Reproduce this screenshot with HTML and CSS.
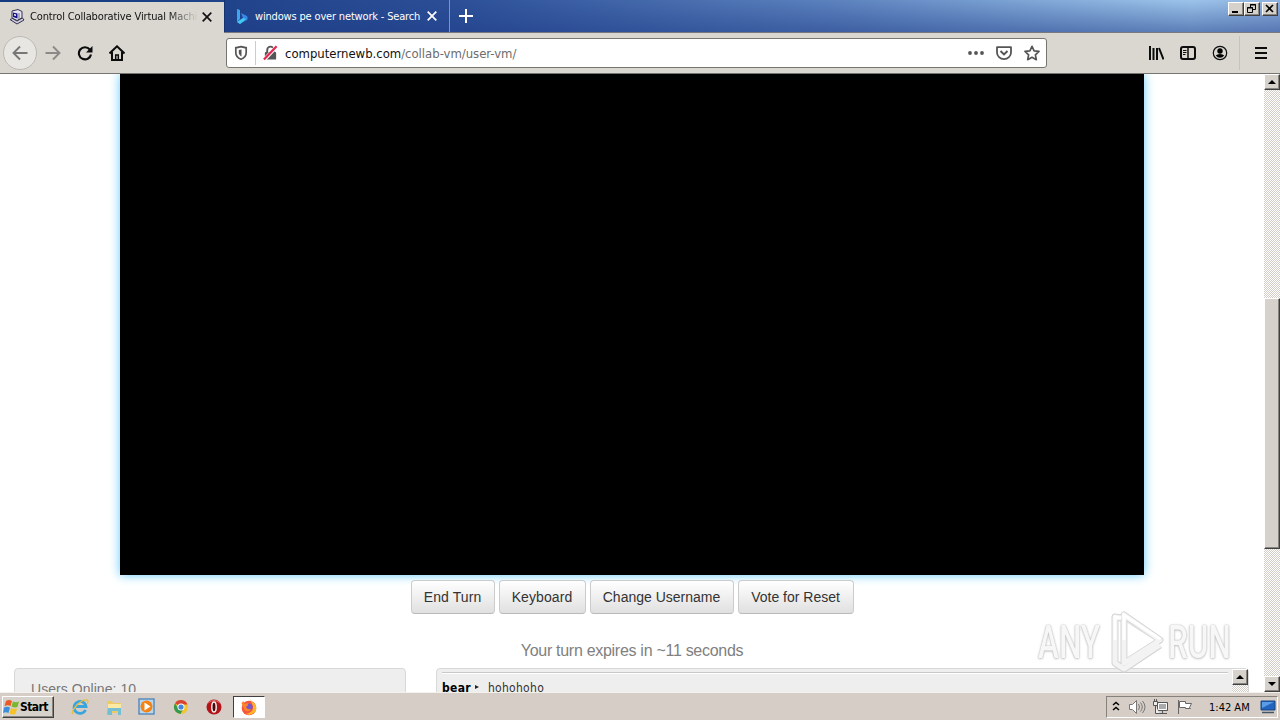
FILE: index.html
```
<!DOCTYPE html>
<html lang="en">
<head>
    <meta charset="UTF-8">
    <title>Control Collaborative Virtual Machines</title>
    <link rel="stylesheet" href="styles.css">
</head>
<body>
    <header class="tabs">
        <div class="tab active">
            <svg class="favicon" width="16" height="16" viewBox="0 0 16 16">
                <path d="M3 2l6-1.500 4 2V9l-5 2.500L3 9z" fill="#e4e2ee" stroke="#33304c"/>
                <path d="M4 3.500l4.500 1v5L4 8z" fill="#14148c"/>
                <path d="M5 5l2 .5V7l-2-.5z" fill="#fff"/>
                <path d="M10 4v6" stroke="#77748c" fill="none"/>
                <path d="M1 10.500l2.500-1L8 12l5.500-3L15 11l-7 4z" fill="#d0cedc" stroke="#33304c"/>
            </svg>
            <span class="tab-title faded">Control Collaborative Virtual Machi</span>
            <svg class="close" width="10" height="10" viewBox="0 0 10 10"><path d="M.7.7l8.6 8.6M9.3.7L.7 9.3" stroke="#111" stroke-width="1.7"/></svg>
        </div>
        <div class="tab second">
            <svg class="favicon" width="16" height="16" viewBox="0 0 16 16">
                <path d="M3 1l3 1v9l-3 3z" fill="#3da5f2"/>
                <path d="M7 5l6 3q2 4-2 5l-5 3-3-2 6-4z" fill="#3789e8"/>
                <path d="M3 14l6-4 3 1-6 5z" fill="#43c8ee"/>
            </svg>
            <span class="tab-title">windows pe over network - Search</span>
            <svg class="close" width="10" height="10" viewBox="0 0 10 10"><path d="M.7.7l8.6 8.6M9.3.7L.7 9.3" stroke="#fff" stroke-width="1.7"/></svg>
        </div>
        <svg class="new-tab" width="14" height="14" viewBox="0 0 14 14"><path d="M7 0v14M0 7h14" stroke="#fff" stroke-width="2"/></svg>
        <div class="window-buttons">
            <span class="bevel"><svg width="13" height="11" viewBox="0 0 13 11"><path d="M3 8h6v2H3z"/></svg></span>
            <span class="bevel"><svg width="13" height="11" viewBox="0 0 13 11"><path d="M5.500 4V1.500h5v5H8M5 2h6M2.500 4.500h5v5h-5zM2 5h6" fill="none" stroke="#000"/></svg></span>
            <span class="bevel gap"><svg width="13" height="11" viewBox="0 0 13 11"><path d="M3 2l7 7M10 2L3 9" stroke="#000" stroke-width="1.6"/></svg></span>
        </div>
    </header>

    <nav class="toolbar">
        <div class="nav-buttons">
            <span class="back"><svg width="16" height="16" viewBox="0 0 16 16"><path d="M15.500 8H1.500M8 1.500L1.500 8 8 14.500" fill="none" stroke="#777" stroke-width="1.900"/></svg></span>
            <svg class="forward" width="16" height="16" viewBox="0 0 16 16"><path d="M.5 8h14M8 1.500L14.500 8 8 14.500" fill="none" stroke="#8c8a88" stroke-width="1.900"/></svg>
            <svg class="reload" width="16" height="16" viewBox="0 0 16 16"><path d="M12.800 4.500A6.100 6.100 0 1 0 14 9.500" fill="none" stroke="#0c0c0d" stroke-width="2.100"/><path d="M15.500 1v6.500H9z" fill="#0c0c0d"/></svg>
            <svg class="home" width="16" height="16" viewBox="0 0 16 16"><path d="M.5 8.500L8 1.300l7.500 7.200" fill="none" stroke="#0c0c0d" stroke-width="2"/><path d="M3 7v8h10V7" fill="none" stroke="#0c0c0d" stroke-width="2"/><path d="M6.700 15v-5h2.600v5" fill="none" stroke="#0c0c0d" stroke-width="1.500"/></svg>
        </div>
        <div class="url-bar">
            <svg class="shield" width="14" height="16" viewBox="0 0 14 16"><path d="M7 1.600l5.200 1.200v4.700c0 3.500-2.300 5.700-5.200 6.700-2.900-1-5.200-3.200-5.200-6.700V2.800z" fill="none" stroke="#555" stroke-width="1.700"/><path d="M7.500 4.500v7c-1.700-1-2.700-2.200-2.700-4V5z" fill="#555"/></svg>
            <svg class="lock" width="16" height="16" viewBox="0 0 16 16"><path d="M4.500 7V4.700a3.500 3.500 0 0 1 7 0V7" fill="none" stroke="#555" stroke-width="2"/><rect x="2" y="7" width="12" height="8" rx="1" fill="#555"/><path d="M1 15.500L14.500 1" stroke="#fff" stroke-width="4"/><path d="M1 15L14.500 .8" stroke="#e22850" stroke-width="2.400"/></svg>
            <span class="url"><b>computernewb.com</b>/collab-vm/user-vm/</span>
            <svg class="page-actions" width="16" height="16" viewBox="0 0 16 16" fill="#555"><circle cx="2" cy="8" r="1.900"/><circle cx="8" cy="8" r="1.900"/><circle cx="14" cy="8" r="1.900"/></svg>
            <svg class="pocket" width="16" height="16" viewBox="0 0 16 16"><path d="M1 2.200h14v5.300a7 6.600 0 0 1-14 0z" fill="none" stroke="#555" stroke-width="1.800" stroke-linejoin="round"/><path d="M4.500 6L8 9.400 11.500 6" fill="none" stroke="#555" stroke-width="2"/></svg>
            <svg class="star" width="16" height="16" viewBox="0 0 16 16"><path d="M8 1.300l2.100 4.500 4.900.6-3.600 3.400.9 4.900L8 12.300l-4.300 2.400.9-4.900L1 6.400l4.900-.6z" fill="none" stroke="#555" stroke-width="1.700" stroke-linejoin="round"/></svg>
        </div>
        <div class="tools">
            <svg width="16" height="16" viewBox="0 0 16 16"><path d="M2 1v14M5.500 3v12M9 3v12M11 3l4.500 11.500" stroke="#0c0c0d" stroke-width="2"/></svg>
            <svg width="16" height="16" viewBox="0 0 16 16"><rect x="1" y="2" width="14" height="12" rx="2" fill="none" stroke="#0c0c0d" stroke-width="2"/><path d="M8 2v12" stroke="#0c0c0d" stroke-width="1.500"/><path d="M3 5.500h3.500M3 7.500h3.500M3 9.500h2.500" stroke="#0c0c0d"/></svg>
            <svg width="16" height="16" viewBox="0 0 16 16"><circle cx="8" cy="8" r="6.700" fill="none" stroke="#0c0c0d" stroke-width="1.200"/><circle cx="8" cy="6" r="2.700"/><path d="M3.800 10.500Q5 9 8 9t4.200 1.500Q10.500 12.800 8 12.800t-4.200-2.300z"/></svg>
            <svg class="menu" width="16" height="16" viewBox="0 0 16 16"><path d="M2 3h12M2 8h12M2 13h12" stroke="#0c0c0d" stroke-width="2"/></svg>
        </div>
    </nav>

    <div class="viewport">
        <main class="page">
            <div class="display"></div>
            <div class="buttons">
                <button class="end">End Turn</button>
                <button class="keyboard">Keyboard</button>
                <button class="username">Change Username</button>
                <button class="vote">Vote for Reset</button>
            </div>
            <p class="status">Your turn expires in ~11 seconds</p>
            <div class="panels">
                <div class="users">Users Online: 10</div>
                <div class="chat">
                    <div class="messages"><b>bear</b><i></i><span>hohohoho</span></div>
                    <div class="chat-scroll"><span class="bevel arrow up"></span></div>
                </div>
            </div>
            <!-- watermark -->
            <div class="watermark">
                <span class="any">ANY</span>
                <svg width="60" height="64" viewBox="0 0 60 64">
                    <path d="M16 8l-6-1v46l9 6 36-24M19 5v48l36-23z" fill="none" stroke="#d4d4d4" stroke-width="7" stroke-linejoin="round"/>
                    <path d="M16 8l-6-1v46l9 6 36-24M19 5v48l36-23z" fill="none" stroke="#f3f3f3" stroke-width="5" stroke-linejoin="round"/>
                    <path d="M10 30V7l6 1M19 30V5l36 24" fill="none" stroke="#fff" stroke-width="3"/>
                    <path d="M22 12v36l28-18z" fill="#fff" stroke="#ddd"/>
                </svg>
                <span class="run">RUN</span>
            </div>
        </main>
        <div class="scrollbar">
            <span class="bevel arrow up"></span>
            <span class="bevel thumb"></span>
            <span class="bevel arrow down"></span>
        </div>
    </div>

    <footer class="taskbar">
        <div class="start bevel">
            <svg width="17" height="16" viewBox="0 0 17 16">
                <path d="M3 2q3-2 6 0L7.500 7Q5 5.500 1.500 7z" fill="#ea5b25"/>
                <path d="M10 2.500q3 1.500 6 0L14.500 8q-3 1-6-.5z" fill="#7bb72c"/>
                <path d="M1 8.500q3-1.500 6 0L5.500 14q-3-1.500-5.500 0z" fill="#3d8fdc"/>
                <path d="M8 9q3 1.500 6 .5L12.500 15q-3 1-6-.5z" fill="#f6c224"/>
            </svg>
            <span>Start</span>
        </div>
        <div class="launch">
            <svg width="18" height="18" viewBox="0 0 18 18"><path d="M14.500 12A6 6 0 1 1 15 8.500H5" fill="none" stroke="#3aa5dc" stroke-width="2.800"/><path d="M2 16C-1 13 10 1 16 2q2 1 0 4" fill="none" stroke="#e9bd3a" stroke-width="1.300"/></svg>
            <svg width="18" height="18" viewBox="0 0 18 18"><path d="M2 3h5l1 2h8v10H2z" fill="#edcb62"/><path d="M3 6h13v4H3z" fill="#fbe9a4"/><path d="M2 16l1-6h13v7h-3v-4H7v4H3z" fill="#75bfd4"/></svg>
            <svg width="18" height="18" viewBox="0 0 18 18"><rect x="1" y="1" width="15" height="15" fill="#b8d7ee" stroke="#4a83b8" stroke-width="1.300"/><circle cx="8.500" cy="8.500" r="6" fill="#f28316"/><path d="M6.500 4.500l6 4-6 4z" fill="#fff"/></svg>
            <svg width="18" height="18" viewBox="0 0 18 18"><circle cx="9" cy="9" r="7" fill="#f3c52f"/><path d="M9 9L3 5.300A7 7 0 0 1 15.500 6.500H9z" fill="#d94535"/><path d="M3 5.300A7 7 0 0 0 8.500 16l3-5.500L9 9 6 10z" fill="#359a50"/><circle cx="9" cy="9" r="3.500" fill="#fff"/><circle cx="9" cy="9" r="2.600" fill="#4785dd"/></svg>
            <svg width="18" height="18" viewBox="0 0 18 18"><circle cx="9" cy="9" r="7.500" fill="#b31217"/><path d="M3 5q6-5 12 0" stroke="#e56a65" fill="none"/><ellipse cx="9" cy="9" rx="2.200" ry="5" fill="#4c0508" stroke="#eee" stroke-width="1.500"/></svg>
            <span class="task"><svg width="18" height="18" viewBox="0 0 18 18"><circle cx="9" cy="10" r="7.300" fill="#f6573c"/><path d="M10 1q2 3 5 5 3 6-1 9-4 3-8 1 8-2 7-8z" fill="#ffb52b"/><circle cx="9" cy="9" r="3.500" fill="#7656c9"/><path d="M1.500 5l2-2 1 3 4-1-1 3q-2 0-1 2 2 2 5 1-3 4-7 1z" fill="#ff8425"/></svg></span>
        </div>
        <div class="tray">
            <svg class="chevrons" width="8" height="12" viewBox="0 0 8 12"><path d="M1 4l3-2.500L7 4M1 9l3-2.500L7 9" fill="none" stroke="#000" stroke-width="1.500"/></svg>
            <svg class="volume" width="18" height="16" viewBox="0 0 18 16" fill="none" stroke="#777"><path d="M1.500 5.500h3l4-4v13l-4-4h-3z" fill="#fff"/><path d="M10.500 5q2 3 0 6M12.500 3.500q3.500 4.500 0 9M14.500 2q5 6 0 12"/></svg>
            <svg class="network" width="17" height="16" viewBox="0 0 17 16"><path d="M5.500 3.500h10v8h-10z" fill="#aaa" stroke="#555"/><path d="M6.500 4.500h8v6h-8z" fill="none" stroke="#fff"/><path d="M7 14.500h8M10.500 12v2" stroke="#555"/><path d="M1.500 2.500h4v4h-4zM2.500 0v2M4.500 0v2M3.500 6.500v8h4" fill="#eee" stroke="#555"/></svg>
            <svg class="flag" width="17" height="16" viewBox="0 0 17 16"><path d="M2.500 1v14M3.500 2.500h6v2h6l-2 4 1 1H9.500v-1h-6z" fill="#fff" stroke="#666"/></svg>
            <span class="clock">1:42 AM</span>
            <svg class="desktop" width="16" height="14" viewBox="0 0 16 14"><path d="M1 1h14v9H1z" fill="#2263bd" stroke="#164584"/><path d="M2 2h12L2 8z" fill="#5a9ce6"/><path d="M2 12.500h12" stroke="#456" stroke-width="1.500"/></svg>
        </div>
    </footer>
</body>
</html>
```
FILE: styles.css
```
* {
    box-sizing: border-box;
}

body {
    margin: 0;
    width: 1280px;
    height: 720px;
    overflow: hidden;
    display: flex;
    flex-direction: column;
    background: white;
    font-family: 'DejaVu Sans Condensed', 'DejaVu Sans', sans-serif;
    font-stretch: condensed;
    font-size: 11px;
}

svg {
    display: block;
    flex: none;
}

.bevel {
    background: #d6d2cb;
    border: 1px solid;
    border-color: #fff #404040 #404040 #fff;
    box-shadow: inset -1px -1px #888580;
}

/* tab strip */
.tabs {
    height: 33px;
    flex: none;
    display: flex;
    background: linear-gradient(to bottom, rgba(30, 60, 135, 0) 0%, rgba(30, 60, 135, 0.5) 100%), linear-gradient(to right, #15397e 0%, #2b4f97 35%, #5c82be 65%, #9cc4ea 93%, #8fb2df 100%);
    border-bottom: 1px solid #77797f;
}

.tab {
    display: flex;
    align-items: center;
    color: white;
}

.tab.active {
    width: 224px;
    height: 31px;
    margin-top: 2px;
    padding: 0 12px 2px 9px;
    background: #dad7d1;
    color: #111;
    box-shadow: 0 1px #dad7d1;
}

.tab.second {
    width: 226px;
    padding: 0 12px 0 9px;
    border-left: 1px solid #15336f;
    border-right: 1px solid #7f94bd;
}

.tab-title {
    margin-left: 5px;
    white-space: nowrap;
    flex: 1;
}

.active .tab-title {
    letter-spacing: -0.14px;
}

.second .tab-title {
    letter-spacing: -0.17px;
}

.faded {
    mask-image: linear-gradient(to right, #000 138px, transparent 168px);
}

.close {
    margin-left: 5px;
}

.new-tab {
    margin: 9px 0 0 9px;
}

.window-buttons {
    display: flex;
    margin: 2px 2px 0 auto;
}

.window-buttons .bevel {
    width: 16px;
    height: 14px;
}

.window-buttons .gap {
    margin-left: 2px;
}

/* navigation toolbar */
.toolbar {
    height: 41px;
    flex: none;
    display: flex;
    align-items: center;
    background: #dad7d1;
    border-bottom: 1px solid #777571;
}

.nav-buttons {
    width: 226px;
    display: flex;
    align-items: center;
}

.back {
    width: 34px;
    height: 34px;
    margin-left: 3px;
    padding: 8px;
    border: 1px solid #bcb9b4;
    border-radius: 50%;
    background: #e8e6e2;
}

.forward {
    margin-left: 8px;
}

.reload,
.home {
    margin-left: 16px;
}

.url-bar {
    width: 821px;
    height: 30px;
    display: flex;
    align-items: center;
    padding: 0 6px 0 7px;
    background: white;
    border: 1px solid #77756f;
    border-radius: 3px;
}

.lock {
    margin-left: 7px;
    padding-left: 7px;
    width: 23px;
    height: 24px;
    border-left: 1px solid #ccc;
}

.url {
    flex: 1;
    margin-left: 7px;
    font-size: 13px;
    letter-spacing: -0.02px;
    color: #6c6c6c;
}

.url b {
    font-weight: normal;
    color: #111;
}

.pocket,
.star {
    margin-left: 12px;
}

.tools {
    margin-left: auto;
    display: flex;
    align-items: center;
    gap: 16px;
    padding-right: 11px;
}

.menu {
    width: 30px;
    height: 34px;
    margin-left: -5px;
    padding-left: 13px;
    border-left: 1px solid #c6c3be;
}

/* web page */
.viewport {
    height: 618px;
    flex: none;
    display: flex;
}

.page {
    position: relative;
    width: 1264px;
    overflow: hidden;
    font-family: 'Liberation Sans', Arial, sans-serif;
}

.display {
    width: 1024px;
    height: 501px;
    margin-left: 120px;
    background: black;
    box-shadow: 0 0 10px #5fcaff;
}

.buttons {
    position: relative;
    display: flex;
    justify-content: center;
    gap: 4px;
    margin-top: 5px;
}

.buttons button {
    height: 34px;
    padding: 0;
    font-family: inherit;
    font-size: 14px;
    color: #333;
    background: linear-gradient(to bottom, #fff, #e0e0e0);
    border: 1px solid #ccc;
    border-bottom-color: #b9b9b9;
    border-radius: 4px;
}

.buttons .end {
    width: 84px;
    letter-spacing: 0.1px;
}

.buttons .keyboard {
    width: 87px;
    letter-spacing: 0.1px;
}

.username {
    width: 144px;
}

.vote {
    width: 116px;
}

.status {
    margin: 27px 0 0;
    height: 27px;
    font-size: 16px;
    line-height: 20px;
    letter-spacing: -0.29px;
    text-align: center;
    color: #808080;
}

.panels {
    display: flex;
    padding-left: 14px;
    gap: 30px;
}

.users,
.chat {
    height: 60px;
    background: #eee;
    border: 1px solid #d8d8d8;
    border-radius: 4px;
}

.users {
    width: 392px;
    padding: 12px 16px;
    font-size: 14px;
    line-height: 16px;
    letter-spacing: 0.05px;
    color: #777;
}

.chat {
    width: 813px;
    display: flex;
    justify-content: space-between;
    padding-left: 5px;
}

.messages {
    width: 786px;
    height: 50px;
    margin-top: 3px;
    padding-top: 6px;
    border-top: 1px solid #c8c8c8;
    box-shadow: inset 0 1px #fff;
    font-family: 'DejaVu Sans Condensed', 'DejaVu Sans', sans-serif;
    font-stretch: condensed;
    font-size: 12px;
    line-height: 18px;
    letter-spacing: 0.3px;
    color: #333;
}

.messages b {
    color: #000;
}

.messages i {
    display: inline-block;
    margin: 0 9px 3px 4px;
    border: 2px solid transparent;
    border-left: 4px solid #222;
    border-right: 0;
}

.watermark {
    position: absolute;
    left: 1038px;
    top: 536px;
    display: flex;
    align-items: center;
    font-family: Roboto, sans-serif;
    font-weight: 500;
    font-stretch: normal;
    font-size: 47px;
    line-height: 64px;
    color: #f7f7f7;
    text-shadow: 0 0 2px #aaa, 0 1px 3px #ccc;
}

.watermark span {
    width: 66px;
    transform-origin: left;
    transform: scaleX(0.67);
}

.watermark svg {
    margin-left: 1px;
}

.watermark .run {
    margin-left: 3px;
}

/* classic scrollbars */
.scrollbar,
.chat-scroll {
    width: 16px;
    background: repeating-conic-gradient(#d2cec7 0 25%, #fff 0 50%) 0 0 / 2px 2px;
}

.scrollbar {
    display: flex;
    flex-direction: column;
}

.arrow {
    width: 16px;
    height: 16px;
    display: flex;
    align-items: center;
    justify-content: center;
}

.arrow::after {
    content: '';
    border: 4px solid transparent;
}

.up::after {
    border-top: 0;
    border-bottom-color: #000;
}

.down::after {
    border-bottom: 0;
    border-top-color: #000;
}

.thumb {
    height: 251px;
    margin-top: 208px;
}

.scrollbar .down {
    margin-top: auto;
}

/* taskbar */
.taskbar {
    height: 28px;
    flex: none;
    display: flex;
    background: #d5cdc6;
    border-top: 1px solid #f3f1eb;
}

.start {
    width: 52px;
    height: 22px;
    margin: 3px 0 0 2px;
    display: flex;
    align-items: center;
    padding-left: 0;
    font-size: 12px;
    font-weight: bold;
}

.start span {
    letter-spacing: -0.6px;
}

.launch {
    display: flex;
    align-items: center;
    margin-left: 17px;
    gap: 15.6px;
}

.task {
    width: 32px;
    height: 22px;
    margin-left: -6px;
    padding: 1px 6px;
    background: white;
    border: 1px solid;
    border-color: #404040 #fff #fff #404040;
}

.tray {
    width: 172px;
    height: 22px;
    margin: 3px 2px 0 auto;
    display: flex;
    align-items: center;
    padding-left: 5px;
    border: 1px solid;
    border-color: #85817b #fff #fff #85817b;
}

.volume {
    margin-left: 8px;
}

.network {
    margin-left: 6px;
}

.flag {
    margin-left: 7px;
}

.clock {
    margin-left: 16px;
    width: 45px;
    white-space: nowrap;
    letter-spacing: 0;
}

.desktop {
    margin-left: 6px;
}
```
